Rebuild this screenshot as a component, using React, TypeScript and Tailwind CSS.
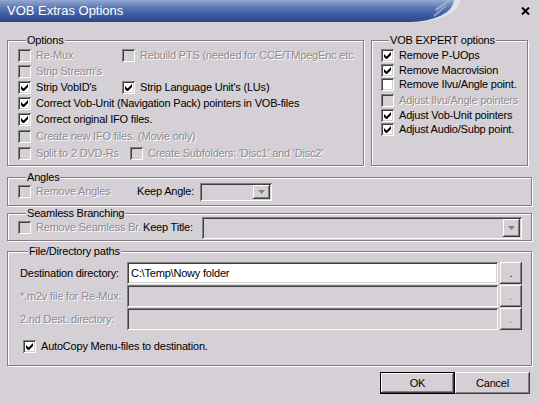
import clsx from 'clsx';

const BG = 'bg-[#d4d0d5]';
const sunken =
  'shadow-[inset_1px_1px_#808080,inset_-1px_-1px_#fff,inset_2px_2px_#404040,inset_-2px_-2px_#d4d0c8]';
const raised = 'shadow-[inset_-1px_-1px_#404040,inset_1px_1px_#fff,inset_-2px_-2px_#808080]';
const etched = 'border border-[#808080] shadow-[1px_1px_0_#fff,inset_1px_1px_0_#fff]';
const dimText = 'text-[#8e8b90] [text-shadow:1px_1px_0_#fff]';

type OptProps = {
  label: string;
  checked?: boolean;
  disabled?: boolean;
  className?: string;
};

const CheckBox = ({ checked, disabled }: { checked?: boolean; disabled?: boolean }) => (
  <span
    className={clsx(
      'flex size-[13px] shrink-0 items-center justify-center',
      sunken,
      disabled ? BG : 'bg-white'
    )}
  >
    {checked && (
      <svg width="7" height="7" viewBox="0 0 7 7" aria-hidden="true">
        <polygon points="0,2 2.5,4.5 7,0 7,3 2.5,7.5 0,5" fill="#000" />
      </svg>
    )}
  </span>
);

const Opt = ({ label, checked, disabled, className }: OptProps) => (
  <div className={clsx('flex items-center gap-[5px] whitespace-nowrap', className)}>
    <CheckBox checked={checked} disabled={disabled} />
    <span className={clsx(disabled && dimText)}>{label}</span>
  </div>
);

const Group = ({
  title,
  className,
  children,
}: {
  title: string;
  className?: string;
  children: React.ReactNode;
}) => (
  <fieldset className={clsx('min-w-0', etched, className)}>
    <legend className={clsx('ml-[8px] px-[1px] leading-[13px]', BG)}>{title}</legend>
    {children}
  </fieldset>
);

const DropArrow = ({ disabled }: { disabled?: boolean }) => (
  <svg width="7" height="4" viewBox="0 0 7 4" aria-hidden="true">
    <polygon points="0,0 7,0 3.5,4" fill={disabled ? '#808080' : '#000'} />
  </svg>
);

const Combo = ({ className }: { className?: string }) => (
  <div className={clsx('flex justify-end p-[2px]', sunken, BG, className)}>
    <div className={clsx('flex w-[17px] items-center justify-center', raised, BG)}>
      <DropArrow disabled />
    </div>
  </div>
);

const PathRow = ({ label, value, disabled }: { label: string; value?: string; disabled?: boolean }) => (
  <div className="flex h-[22px] items-center">
    <span className={clsx('w-[107px] shrink-0 whitespace-nowrap', disabled && dimText)}>{label}</span>
    <div
      className={clsx(
        'flex h-full flex-1 items-center px-[4px]',
        sunken,
        disabled ? BG : 'bg-white'
      )}
    >
      {value}
    </div>
    <button
      className={clsx(
        'ml-[2px] flex h-full w-[22px] items-end justify-center pb-[5px] leading-none',
        raised,
        BG,
        disabled && dimText
      )}
    >
      .
    </button>
  </div>
);

export default function App() {
  return (
    <div
      className={clsx(
        "flex h-[404px] w-[539px] flex-col overflow-hidden font-['Liberation_Sans',Arial,sans-serif] text-[11px] tracking-[-0.2px] text-black",
        BG
      )}
    >
      {/* title bar */}
      <div className="flex h-[22px] shrink-0 items-center">
        <div className="relative h-full w-[460px] rounded-br-[46px_22px] bg-[#dfe5f0]">
          <div className="flex h-full w-[454px] items-center rounded-br-[44px_22px] bg-[linear-gradient(180deg,#95a8d2_0%,#5a77b5_35%,#3b5a9c_70%,#2a4684_100%)] pl-[7px] text-[13px] tracking-normal text-white">
            VOB Extras Options
          </div>
          <div className="absolute right-[8px] top-[4px] h-[2px] w-[18px] rotate-[-35deg] bg-[#9fb0d2]" />
          <div className="absolute right-[12px] top-[10px] h-[2px] w-[16px] rotate-[-40deg] bg-[#8ea2cb]" />
        </div>
        <svg className="ml-auto mr-[9px]" width="9" height="8" viewBox="0 0 9 8" aria-hidden="true">
          <path d="M1 0.5 8 7.5M8 0.5 1 7.5" stroke="#000" strokeWidth="2" />
        </svg>
      </div>

      <div className="flex flex-col px-[7px] pt-[12px]">
        <div className="flex gap-[7px]">
          <Group title="Options" className="h-[132px] w-[357px] pl-[10px]">
            <div className="flex h-[16px] items-center">
              <Opt label="Re-Mux" disabled className="w-[104px]" />
              <Opt label="Rebuild PTS (needed for CCE/TMpegEnc etc" disabled />
            </div>
            <Opt label="Strip Stream's" disabled className="h-[16px]" />
            <div className="flex h-[17px] items-center">
              <Opt label="Strip VobID's" checked className="w-[104px]" />
              <Opt label="Strip Language Unit's (LUs)" checked />
            </div>
            <Opt label="Correct Vob-Unit (Navigation Pack) pointers in VOB-files" checked className="h-[15px]" />
            <Opt label="Correct original IFO files." checked className="h-[16px]" />
            <Opt label="Create new IFO files. (Movie only)" disabled className="h-[18px]" />
            <div className="flex h-[17px] items-center">
              <Opt label="Split to 2 DVD-Rs" disabled className="w-[112px]" />
              <Opt label="Create Subfolders: 'Disc1' and 'Disc2'" disabled />
            </div>
          </Group>

          <Group title="VOB EXPERT options" className="h-[132px] w-[157px] pl-[9px]">
            <Opt label="Remove P-UOps" checked className="h-[16px]" />
            <Opt label="Remove Macrovision" checked className="h-[14px]" />
            <Opt label="Remove Ilvu/Angle point." className="h-[15px]" />
            <Opt label="Adjust Ilvu/Angle pointers" disabled className="h-[16px]" />
            <Opt label="Adjust Vob-Unit pointers" checked className="h-[14px]" />
            <Opt label="Adjust Audio/Subp point." checked className="h-[14px]" />
          </Group>
        </div>

        <Group title="Angles" className="mt-[5px] h-[35px] pl-[10px]">
          <div className="flex h-[15px] items-center">
            <Opt label="Remove Angles" disabled className="w-[119px]" />
            <span className="w-[63px]">Keep Angle:</span>
            <Combo className="h-[18px] w-[72px]" />
          </div>
        </Group>

        <Group title="Seamless Branching" className="mt-[1px] h-[34px] pl-[10px] pr-[9px]">
          <div className="flex h-[15px] items-center">
            <Opt label="Remove Seamless Br." disabled className="w-[125px]" />
            <span className="w-[59px]">Keep Title:</span>
            <Combo className="h-[22px] flex-1" />
          </div>
        </Group>

        <Group title="File/Directory paths" className="mt-[4px] h-[121px] pl-[12px] pr-[9px]">
          <div className="flex flex-col gap-[1px] pt-[4px]">
            <PathRow label="Destination directory:" value="C:\Temp\Nowy folder" />
            <PathRow label="*.m2v file for Re-Mux:" disabled />
            <PathRow label="2.nd Dest. directory:" disabled />
          </div>
          <Opt label="AutoCopy Menu-files to destination." checked className="mt-[10px] ml-[3px] h-[13px]" />
        </Group>

        <div className="mt-[6px] flex justify-end pr-[2px]">
          <button className={clsx('h-[22px] w-[75px] border border-black', raised, BG)}>OK</button>
          <button className={clsx('h-[22px] w-[75px]', raised, BG)}>Cancel</button>
        </div>
      </div>
    </div>
  );
}
